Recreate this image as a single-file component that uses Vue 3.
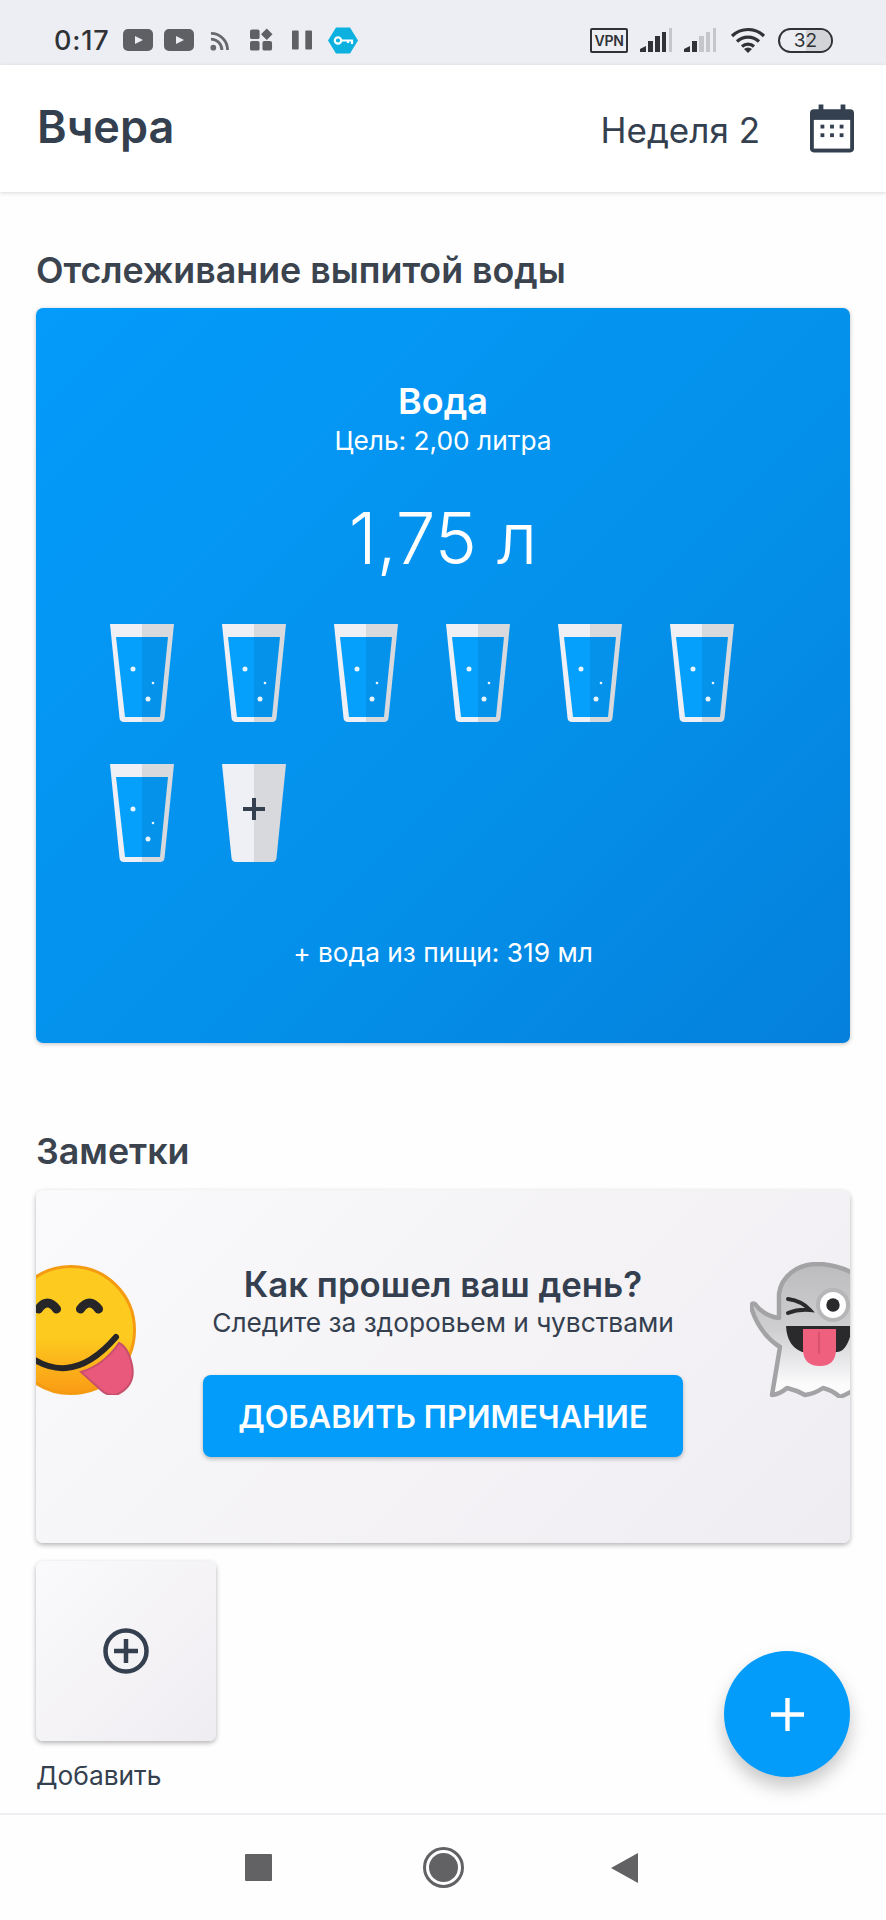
<script setup>
const cups = [1, 2, 3, 4, 5, 6, 7]
</script>

<template>
  <div class="page">
    <div class="status">
      <div class="status-group">
        <span class="time">0:17</span>
        <svg class="st yt" viewBox="0 0 30 22"><rect width="30" height="22" rx="5" fill="#5f6063"/><path d="M12 7l8 4-8 4z" fill="#eceef3"/></svg>
        <svg class="st yt y2" viewBox="0 0 30 22"><rect width="30" height="22" rx="5" fill="#5f6063"/><path d="M12 7l8 4-8 4z" fill="#eceef3"/></svg>
        <svg class="st rss" viewBox="0 0 20 20"><circle cx="3.5" cy="16.5" r="3" fill="#68696c"/><path d="M1 7.5a11.5 11.5 0 0 1 11.5 11.5M1 1.5a17.5 17.5 0 0 1 17.5 17.5" fill="none" stroke="#68696c" stroke-width="3"/></svg>
        <svg class="st apps" viewBox="0 0 24 24"><rect x="0" y="1" width="10" height="10" rx="2" fill="#5f6063"/><rect x="0" y="13" width="10" height="10" rx="2" fill="#5f6063"/><rect x="13" y="13" width="10" height="10" rx="2" fill="#5f6063"/><path d="M17.5 0l6 6-6 6-6-6z" fill="#5f6063"/></svg>
        <svg class="st pause" viewBox="0 0 21 20"><rect width="7" height="20" rx="1" fill="#5f6063"/><rect x="14" width="7" height="20" rx="1" fill="#5f6063"/></svg>
        <svg class="st key" viewBox="0 0 30 26"><path d="M8 0h14l8 13-8 13H8L0 13z" fill="#0db1e0"/><circle cx="10" cy="13" r="3.2" fill="none" stroke="#fff" stroke-width="2.2"/><path d="M13 13h11v3.5M20 13v2.5" fill="none" stroke="#fff" stroke-width="2.2"/></svg>
      </div>
      <div class="status-group right">
        <span class="vpn">VPN</span>
        <svg class="st sig" viewBox="0 0 33 24"><path d="M0 24v-3l6-3v6z" fill="#303236"/><rect x="8" y="13" width="5" height="11" fill="#303236"/><rect x="15" y="8" width="5" height="16" fill="#303236"/><rect x="22" y="4" width="4" height="20" fill="#303236"/><rect x="29" y="0" width="3" height="24" fill="#c4c6cb"/></svg>
        <svg class="st sig s2" viewBox="0 0 33 24"><path d="M0 24v-3l6-3v6z" fill="#303236"/><rect x="8" y="13" width="5" height="11" fill="#303236"/><rect x="15" y="8" width="5" height="16" fill="#c4c6cb"/><rect x="22" y="4" width="4" height="20" fill="#c4c6cb"/><rect x="29" y="0" width="3" height="24" fill="#c4c6cb"/></svg>
        <svg class="st wifi" viewBox="0 0 36 26"><path d="M2 9a23 23 0 0 1 32 0M7 14.500a16 16 0 0 1 22 0M12 19.500a9 9 0 0 1 12 0" fill="none" stroke="#303236" stroke-width="3.200"/><path d="M18 26l-4-4a6 6 0 0 1 8 0z" fill="#303236"/></svg>
        <div class="battery"><div class="bat-fill"></div><span>32</span></div>
      </div>
    </div>

    <header class="header">
      <h1>Вчера</h1>
      <div class="week">
        <span>Неделя 2</span>
        <svg class="cal" viewBox="0 0 46 50"><path d="M9 0h5v5h18V0h5v5h5a4 4 0 0 1 4 4v37a4 4 0 0 1-4 4H4a4 4 0 0 1-4-4V9a4 4 0 0 1 4-4h5z" fill="#34404f"/><rect x="4" y="16" width="38" height="30" fill="#fff"/><g fill="#34404f"><rect x="11" y="21" width="4" height="4"/><rect x="21" y="21" width="4" height="4"/><rect x="31" y="21" width="4" height="4"/><rect x="11" y="30" width="4" height="4"/><rect x="21" y="30" width="4" height="4"/><rect x="31" y="30" width="4" height="4"/></g></svg>
      </div>
    </header>

    <main class="main">
      <h2 class="first">Отслеживание выпитой воды</h2>
      <section class="water">
        <div class="w-title">Вода</div>
        <div class="w-goal">Цель: 2,00 литра</div>
        <div class="w-amount">1,75 л</div>
        <div class="cups">
          <svg v-for="c in cups" :key="c" class="cup" viewBox="0 0 64 98">
            <path d="M0 0h32v98H14q-4 0-4.500-4z" fill="#eff0f5"/>
            <path d="M64 0H32v98h18q4 0 4.500-4z" fill="#d8d9dd"/>
            <path d="M6 13h26v80H15z" fill="#05a0fc"/>
            <path d="M58 13H32v80h18z" fill="#0592ea"/>
            <circle cx="23" cy="45" r="2.500" fill="#e6f5ff"/>
            <circle cx="43" cy="59" r="1.300" fill="#e6f5ff"/>
            <circle cx="38" cy="75" r="2.500" fill="#e6f5ff"/>
          </svg>
          <svg class="cup" viewBox="0 0 64 98">
            <path d="M0 0h32v98H14q-4 0-4.500-4z" fill="#eff0f5"/>
            <path d="M64 0H32v98h18q4 0 4.500-4z" fill="#d8d9dd"/>
            <path d="M30 34h4v9h9v4h-9v9h-4v-9h-9v-4h9z" fill="#34404f"/>
          </svg>
        </div>
        <div class="w-food">+ вода из пищи: 319 мл</div>
      </section>

      <h2 class="second">Заметки</h2>
      <section class="notes">
        <svg class="emoji smile" viewBox="0 0 130 130">
          <defs>
            <linearGradient id="sm" x1="0" y1="0" x2="0" y2="1"><stop offset="0.55" stop-color="#fdcb1f"/><stop offset="1" stop-color="#fa9b15"/></linearGradient>
          </defs>
          <circle cx="65" cy="65" r="63.500" fill="url(#sm)" stroke="#f49b12" stroke-width="3"/>
          <path d="M32.500 44q9-12 18 0M74.500 44q9-12 18 0" fill="none" stroke="#262528" stroke-width="9" stroke-linecap="round"/>
          <path d="M10 80Q60 130 110 72" fill="none" stroke="#262528" stroke-width="6" stroke-linecap="round"/>
          <path d="M75 107Q98 100 113 78Q122 82 126 100Q130 120 112 129Q102 132 95 125Z" fill="#e9597c" stroke="#c8506c" stroke-width="2"/>
        </svg>
        <svg class="emoji ghost" viewBox="0 0 100 136">
          <defs>
            <linearGradient id="gh" x1="0" y1="0" x2="0" y2="1"><stop offset="0" stop-color="#bcbcbf"/><stop offset="0.5" stop-color="#cfcfd2"/><stop offset="0.9" stop-color="#fbfbfc"/></linearGradient>
          </defs>
          <path d="M104 12C92 5 78 2 67 2C48 2 31 14 29 32L29 56Q14 54 5 42Q0 40 2 48Q10 72 30 85L22 133Q30 132 37 126Q46 128 55 133Q64 132 73 126Q82 128 90 135Q95 133 104 128Z" fill="url(#gh)" stroke="#a3a3a6" stroke-width="4.500" stroke-linejoin="round"/>
          <circle cx="83" cy="43" r="15" fill="#fff" stroke="#b6b6b9" stroke-width="4"/>
          <circle cx="83" cy="43" r="6.700" fill="#2a2a2d"/>
          <path d="M38 37q14 2 22 11-12-1-22 3" fill="none" stroke="#2a2a2d" stroke-width="4" stroke-linecap="round"/>
          <path d="M36 64h64v11q-5 15-13 15H52Q37 84 36 64z" fill="#2a2a2d"/>
          <path d="M53 67h33v20q0 17-16 17-17 0-17-17z" fill="#ef5f7e"/>
          <path d="M69 70v22" stroke="#d14d6b" stroke-width="1.500"/>
        </svg>
        <div class="n-title">Как прошел ваш день?</div>
        <div class="n-sub">Следите за здоровьем и чувствами</div>
        <button class="n-btn">ДОБАВИТЬ ПРИМЕЧАНИЕ</button>
      </section>

      <div class="add-tile">
        <svg class="add-icon" viewBox="0 0 46 46"><circle cx="23" cy="23" r="20.500" fill="none" stroke="#34404f" stroke-width="4.500"/><path d="M23 11v24M11 23h24" stroke="#34404f" stroke-width="4.500"/></svg>
      </div>
      <div class="add-label">Добавить</div>

      <button class="fab" aria-label="Добавить">
        <svg viewBox="0 0 34 34"><path d="M17 0v34M0 17h34" stroke="#fff" stroke-width="4.500"/></svg>
      </button>
    </main>

    <nav class="nav">
      <span class="square"></span>
      <span class="circle"><span></span></span>
      <svg class="back" viewBox="0 0 27 30"><path d="M27 0v30L0 15z" fill="#626265"/></svg>
    </nav>
  </div>
</template>

<style>
html, body { margin: 0; background: #fff; }
</style>

<style scoped>
.page {
  width: 886px;
  height: 1920px;
  display: flex;
  flex-direction: column;
  overflow: hidden;
  color: #34404f;
  font-family: Inter, "Noto Sans", sans-serif;
  background: #fefefe;
}
.status {
  height: 65px;
  flex: none;
  background: #eceef3;
  display: flex;
  align-items: center;
  justify-content: space-between;
  padding: 15px 53px 0 54px;
  box-sizing: border-box;
}
.status-group { display: flex; align-items: center; }
.st { display: block; flex: none; }
.time { font-size: 27px; font-weight: 500; color: #303236; width: 69px; letter-spacing: 0.8px; }
.yt { width: 30px; height: 22px; }
.y2 { margin-left: 11px; }
.rss { width: 19px; height: 19px; margin-left: 16px; margin-top: 3px; }
.apps { width: 23px; height: 24px; margin-left: 21px; }
.pause { width: 20px; height: 20px; margin-left: 19px; }
.key { width: 30px; height: 27px; margin-left: 16px; }
.vpn {
  box-sizing: border-box;
  width: 38px;
  height: 25px;
  border: 2px solid #303236;
  border-radius: 2px;
  font-size: 14px;
  font-weight: 600;
  line-height: 21px;
  text-align: center;
  color: #303236;
  letter-spacing: -0.3px;
}
.sig { width: 33px; height: 24px; margin-left: 12px; }
.s2 { margin-left: 11px; }
.wifi { width: 36px; height: 26px; margin-left: 13px; }
.battery {
  position: relative;
  box-sizing: border-box;
  width: 55px;
  height: 25px;
  margin-left: 12px;
  border: 2px solid #303236;
  border-radius: 13px;
  overflow: hidden;
  text-align: center;
  font-size: 19px;
  line-height: 21px;
  color: #303236;
}
.bat-fill { position: absolute; left: 26px; right: 0; top: 0; bottom: 0; background: #d2d4d8; }
.battery span { position: relative; }

.header {
  height: 127px;
  flex: none;
  box-sizing: border-box;
  padding: 0 32px 0 37px;
  display: flex;
  align-items: center;
  justify-content: space-between;
  background: #fff;
  box-shadow: 0 1px 4px rgba(52, 64, 79, 0.2);
  position: relative;
  z-index: 1;
}
h1 { margin: 0; font-size: 45px; font-weight: 600; line-height: 1; padding-bottom: 5px; }
.week { display: flex; align-items: center; gap: 50px; font-size: 35px; }
.week span { padding-top: 3px; }
.cal { width: 44px; height: 49px; display: block; }

.main {
  flex: 1;
  position: relative;
  box-sizing: border-box;
  padding: 0 36px;
  min-height: 0;
}
h2 { margin: 0; font-size: 35.800px; font-weight: 600; line-height: 36px; color: #3a434e; }
.first { padding-top: 60px; margin-bottom: 20px; }
.water {
  box-sizing: border-box;
  height: 735px;
  padding-top: 74px;
  border-radius: 7px;
  background: linear-gradient(135deg, #049bfa 0%, #0490ea 60%, #0480dc 100%);
  color: #fff;
  text-align: center;
  box-shadow: 0 1px 4px rgba(0, 0, 0, 0.25);
}
.w-title { font-size: 36px; font-weight: 600; line-height: 38px; }
.w-goal { font-size: 26.300px; line-height: 30px; margin-top: 6px; }
.w-amount { font-size: 71px; font-weight: 300; line-height: 90px; margin-top: 37px; }
.cups {
  display: grid;
  grid-template-columns: repeat(6, 64px);
  column-gap: 48px;
  row-gap: 42px;
  padding-left: 74px;
  margin-top: 41px;
  height: 238px;
}
.cup { width: 64px; height: 98px; display: block; }
.w-food { font-size: 26.300px; line-height: 30px; margin-top: 76px; }

.second { margin-top: 90px; margin-bottom: 21px; }
.notes {
  position: relative;
  overflow: hidden;
  box-sizing: border-box;
  height: 353px;
  padding-top: 71px;
  text-align: center;
  border-radius: 7px;
  background: linear-gradient(135deg, #faf9fb 0%, #efedf1 100%);
  box-shadow: 0 2px 5px rgba(0, 0, 0, 0.3);
}
.emoji { position: absolute; display: block; }
.smile { width: 130px; height: 130px; left: -30px; top: 75px; }
.ghost { width: 100px; height: 136px; right: 0; top: 72px; }
.n-title { font-size: 34.800px; font-weight: 600; line-height: 46px; }
.n-sub { font-size: 26.300px; line-height: 30px; margin-top: 1px; }
.n-btn {
  display: block;
  width: 480px;
  height: 82px;
  margin: 37px auto 0;
  border: 0;
  border-radius: 8px;
  background: #049cfb;
  color: #fff;
  font-family: inherit;
  font-size: 31px;
  font-weight: 600;
  box-shadow: 0 2px 4px rgba(0, 0, 0, 0.25);
}
.add-tile {
  width: 180px;
  height: 180px;
  margin-top: 18px;
  display: flex;
  align-items: center;
  justify-content: center;
  border-radius: 7px;
  background: linear-gradient(135deg, #faf9fb 0%, #efedf1 100%);
  box-shadow: 0 2px 5px rgba(0, 0, 0, 0.3);
}
.add-icon { width: 46px; height: 46px; display: block; }
.add-label { font-size: 26.300px; line-height: 30px; margin-top: 20px; }
.fab {
  position: absolute;
  right: 36px;
  bottom: 36px;
  width: 126px;
  height: 126px;
  padding: 0;
  border: 0;
  border-radius: 50%;
  background: #049cfb;
  display: flex;
  align-items: center;
  justify-content: center;
  box-shadow: 0 10px 18px rgba(0, 0, 0, 0.22);
}
.fab svg { width: 33px; height: 33px; display: block; }

.nav {
  height: 107px;
  flex: none;
  box-sizing: border-box;
  border-top: 2px solid #f0eff3;
  background: #fefefe;
  display: flex;
  align-items: center;
  justify-content: center;
  padding-right: 3px;
  position: relative;
}
.square { width: 27px; height: 27px; background: #626265; border-radius: 1px; display: block; }
.circle {
  box-sizing: border-box;
  width: 41px;
  height: 41px;
  margin-left: 151px;
  border: 3px solid #626265;
  border-radius: 50%;
  padding: 3px;
  display: block;
}
.circle span { display: block; width: 100%; height: 100%; border-radius: 50%; background: #626265; }
.back { width: 27px; height: 30px; margin-left: 147px; display: block; }
</style>
